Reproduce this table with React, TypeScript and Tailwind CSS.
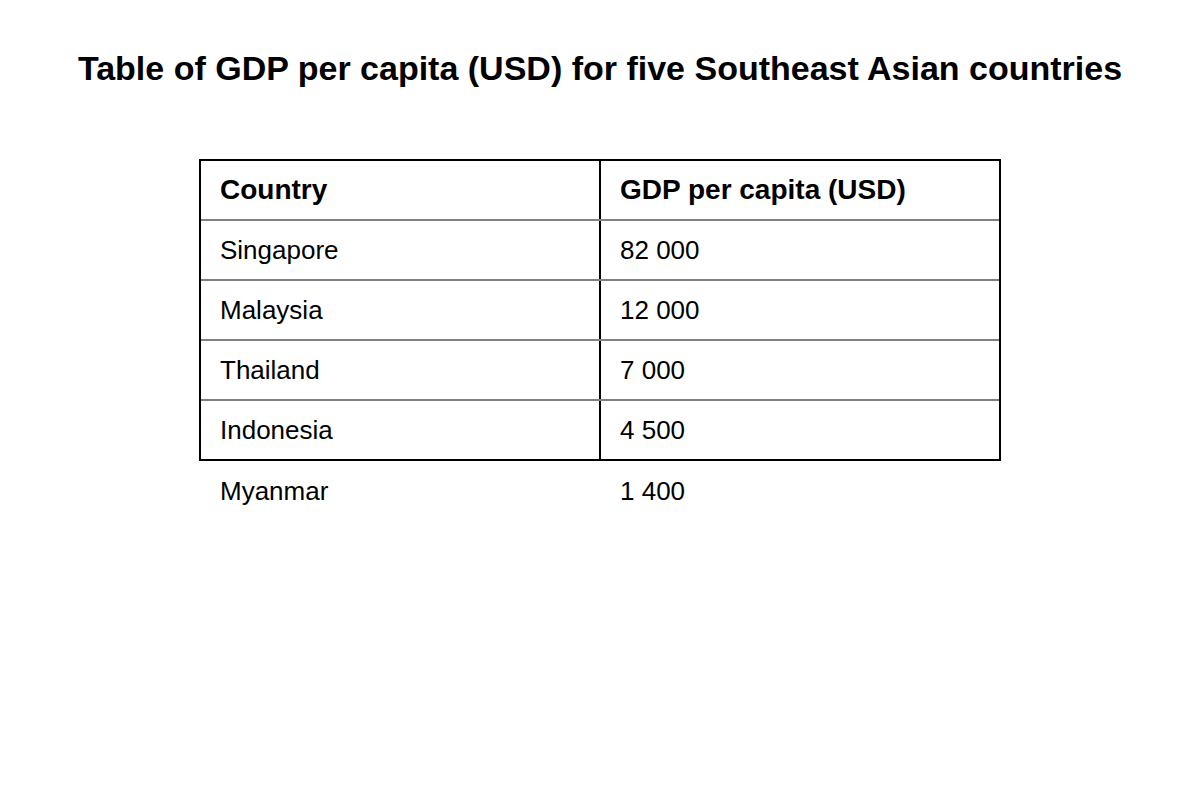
import React from "react";

const rows = [
  ["Singapore", "82 000"],
  ["Malaysia", "12 000"],
  ["Thailand", "7 000"],
  ["Indonesia", "4 500"],
];

export default function App() {
  return (
    <div
      className="w-[1200px] h-[800px] bg-white text-black"
      style={{ fontFamily: '"Liberation Sans", Arial, sans-serif' }}
    >
      <h1 className="pt-[49px] text-center text-[34px] leading-[39px] font-bold">
        Table of GDP per capita (USD) for five Southeast Asian countries
      </h1>
      <div className="mt-[71px] mx-auto w-[802px]">
        <div className="border-2 border-black">
          <div className="grid grid-cols-[398px_2px_398px] h-[58px]">
            <div className="flex items-center pl-[19px] text-[28px] font-bold">Country</div>
            <div className="bg-black" />
            <div className="flex items-center pl-[19px] text-[28px] font-bold">GDP per capita (USD)</div>
          </div>
          {rows.map(([c, v]) => (
            <div key={c} className="border-t-2 border-[#808080]">
              <div className="grid grid-cols-[398px_2px_398px] h-[58px]">
                <div className="flex items-center pl-[19px] text-[26px]">{c}</div>
                <div className="bg-black" />
                <div className="flex items-center pl-[19px] text-[26px]">{v}</div>
              </div>
            </div>
          ))}
        </div>
        <div className="grid grid-cols-[400px_400px] h-[60px]">
          <div className="flex items-center pl-[21px] text-[26px]">Myanmar</div>
          <div className="flex items-center pl-[21px] text-[26px]">1 400</div>
        </div>
      </div>
    </div>
  );
}
